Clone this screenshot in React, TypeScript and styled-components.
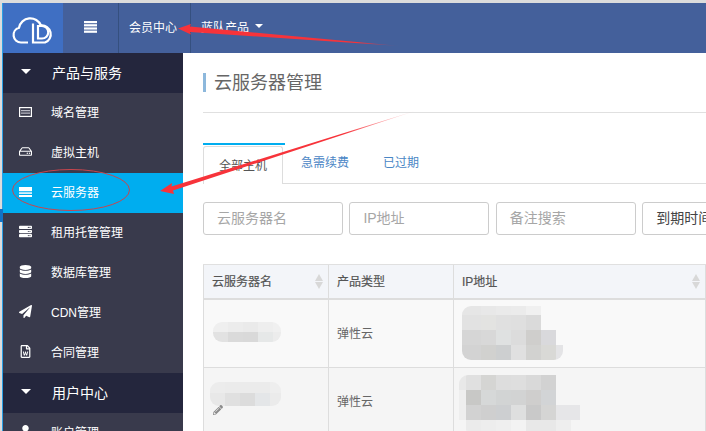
import styled, { createGlobalStyle } from "styled-components"
import type { ReactNode } from "react"
import {
  FaDatabase,
  FaPaperPlane,
  FaPencilAlt,
  FaRegFileWord,
  FaRegHdd,
  FaServer,
  FaUser,
} from "react-icons/fa"

const GlobalStyle = createGlobalStyle`
  html, body {
    margin: 0;
    padding: 0;
    height: 100%;
    overflow: hidden;
    background: #fff;
  }
  body {
    font-family: "Liberation Sans", "Noto Sans CJK SC", sans-serif;
    font-size: 12px;
  }
`

const Page = styled.div`
  position: relative;
  width: 706px;
  height: 431px;
  overflow: hidden;
  box-sizing: border-box;
  padding: 3px 0 0 2px;
  background: #dcdcdc;
`

const Frame = styled.div`
  display: flex;
  flex-direction: column;
  height: 428px;
  border-left: 1px solid #2a9fe4;
  background: #fff;
`

const Header = styled.header`
  display: flex;
  flex: none;
  height: 50px;
  background: #44609b;
  color: #fff;
`

const Logo = styled.div`
  display: flex;
  flex: none;
  width: 60px;
  background: #3f6fc3;
`

const ToggleCell = styled.div`
  display: flex;
  flex: none;
  align-items: center;
  justify-content: center;
  box-sizing: border-box;
  width: 56px;
  padding-bottom: 2px;
  border-right: 1px solid #35507f;
`

const NavCell = styled.div<{ $width: number }>`
  display: flex;
  flex: none;
  align-items: center;
  gap: 6px;
  box-sizing: border-box;
  width: ${(p) => p.$width}px;
  padding: 0 0 4px 10px;
  border-right: 1px solid #35507f;
  &:last-child {
    border-right: none;
  }
`

const Caret = styled.i<{ $size?: number }>`
  display: block;
  flex: none;
  width: 0;
  height: 0;
  border-style: solid;
  border-color: #fff transparent transparent;
  border-width: ${(p) => p.$size ?? 5}px ${(p) => p.$size ?? 5}px 0;
`

const Body = styled.div`
  display: flex;
  flex: 1;
  min-height: 0;
`

const Sidebar = styled.nav`
  flex: none;
  width: 180px;
  overflow: hidden;
  background: #393a4c;
`

const GroupRow = styled.div`
  display: flex;
  align-items: center;
  box-sizing: border-box;
  height: 40px;
  padding: 0 0 3px 18px;
  gap: 21px;
  font-size: 14px;
  color: #fff;
  background: #24263d;
`

const MenuRow = styled.div<{ $active?: boolean }>`
  display: flex;
  align-items: center;
  box-sizing: border-box;
  height: 40px;
  padding: 0 0 3px 16px;
  font-size: 12px;
  color: #fff;
  background: ${(p) => (p.$active ? "#00adef" : "transparent")};
`

const MenuIcon = styled.span`
  display: flex;
  flex: none;
  justify-content: center;
  width: 13px;
  margin-right: 19px;
  font-size: 13px;
`

const Main = styled.main`
  flex: 1;
  min-width: 0;
  overflow: hidden;
  padding: 20px 0 0 20px;
`

const Title = styled.h1`
  margin: 0;
  height: 19px;
  padding-left: 8px;
  border-left: 3px solid #8db8dc;
  font-size: 18px;
  font-weight: 400;
  line-height: 21px;
  color: #666;
`

const Rule = styled.hr`
  height: 1px;
  margin: 20px 0 30px;
  border: none;
  background: #e0e0e0;
`

const TabBar = styled.div`
  display: flex;
  height: 40px;
  border-bottom: 1px solid #ddd;
`

const Tab = styled.div`
  box-sizing: border-box;
  width: 82px;
  padding: 10px 0 0 18px;
  font-size: 12px;
  color: #4a86c5;
`

const ActiveTab = styled.div`
  position: relative;
  box-sizing: border-box;
  width: 80px;
  height: 38px;
  margin-top: 3px;
  padding: 9px 0 0 15px;
  border: 1px solid #ddd;
  border-bottom: none;
  border-radius: 3px 3px 0 0;
  background: #fff;
  font-size: 12px;
  color: #555;
  &::before {
    content: "";
    position: absolute;
    top: -4px;
    left: -1px;
    width: 82px;
    height: 2px;
    background: #00adef;
  }
`

const FilterRow = styled.div`
  display: flex;
  gap: 6.4px;
  margin-top: 18px;
`

const Filter = styled.div<{ $dark?: boolean }>`
  flex: none;
  box-sizing: border-box;
  width: 140px;
  height: 33px;
  padding: 0 13px;
  border: 1px solid #ccc;
  border-radius: 3px;
  font-size: 14px;
  line-height: 30px;
  white-space: nowrap;
  color: ${(p) => (p.$dark ? "#444" : "#a6a6a6")};
`

const Table = styled.div`
  display: grid;
  grid-template-columns: 125px 125px 252px;
  grid-template-rows: 35px 68px 68px;
  width: 503px;
  margin-top: 29px;
  border-top: 1px solid #e0e0e0;
`

const HeadCell = styled.div`
  display: flex;
  align-items: center;
  justify-content: space-between;
  box-sizing: border-box;
  padding: 0 5px 3px 8px;
  background: #f3f5f9;
  border-left: 1px solid #ddd;
  border-right: 1px solid #ddd;
  margin-right: -1px;
  border-bottom: 2px solid #ddd;
  font-size: 12px;
  color: #555;
  -webkit-text-stroke: 0.2px #555;
`

const DataCell = styled.div<{ $even?: boolean }>`
  display: flex;
  flex-direction: column;
  align-items: flex-start;
  justify-content: center;
  box-sizing: border-box;
  overflow: hidden;
  padding: 0 0 3px 8px;
  background: ${(p) => (p.$even ? "#f5f5f5" : "#f9f9f9")};
  border-left: 1px solid #ddd;
  border-right: 1px solid #ddd;
  margin-right: -1px;
  border-bottom: 1px solid #ddd;
  font-size: 12px;
  color: #666;
`

const TopCell = styled(DataCell)`
  justify-content: flex-start;
`

const Sort = styled.span`
  display: flex;
  flex: none;
  flex-direction: column;
  gap: 1px;
  margin-top: 3px;
  &::before,
  &::after {
    content: "";
    width: 0;
    height: 0;
    border-style: solid;
    border-color: transparent transparent #d8d8d8;
    border-width: 0 4px 7px;
  }
  &::after {
    border-color: #d8d8d8 transparent transparent;
    border-width: 7px 4px 0;
  }
`

const Mosaic = styled.div<{ $cols: string; $rows: string; $x: number; $y: number }>`
  display: grid;
  flex: none;
  align-self: flex-start;
  grid-template-columns: ${(p) => p.$cols};
  grid-template-rows: ${(p) => p.$rows};
  margin-left: ${(p) => p.$x}px;
  margin-top: ${(p) => p.$y}px;
  overflow: hidden;
  border-radius: 9px;
`

const Pencil = styled.span`
  display: flex;
  margin: -1px 0 0 1px;
  font-size: 10px;
  color: #8a8a8a;
`

// marks drawn on the screenshot by whoever took it
const Marks = styled.svg`
  position: absolute;
  inset: 0;
  pointer-events: none;
`

const EdgePatch = styled.div`
  position: absolute;
  left: 0;
  top: 209px;
  width: 3px;
  height: 13px;
  background: #1272c4;
`

const BarsIcon = () => (
  <svg width="13" height="12" viewBox="0 0 13 12" fill="#fff">
    <rect y="0" width="13" height="2.2" />
    <rect y="3.2" width="13" height="2.2" />
    <rect y="6.4" width="13" height="2.2" />
    <rect y="9.6" width="13" height="2.2" />
  </svg>
)

const CloudLogo = () => (
  <svg width="60" height="50" viewBox="3 3 60 50" fill="none" stroke="#fff" strokeWidth="2.2">
    <path d="M28 42.5H21A7.5 7.5 0 0 1 19 27.8A11.5 11.5 0 0 1 41 25.5A8.8 8.8 0 0 1 45 42.5H33V23.5" />
    <path d="M38 26V38.5H42A6.2 6.2 0 0 0 42 26Z" />
  </svg>
)

const DomainIcon = () => (
  <svg width="13" height="10" viewBox="0 0 13 10" fill="none">
    <rect x="0.6" y="0.6" width="11.8" height="8.8" stroke="#fff" strokeWidth="1.2" />
    <path d="M2 3.6H11M2 6.2H11" stroke="#b9b9c4" strokeWidth="1.2" />
  </svg>
)

const BandsIcon = () => (
  <svg width="13" height="10" viewBox="0 0 13 10">
    <rect width="13" height="4.2" fill="#fff" />
    <rect y="5.2" width="13" height="1.8" fill="#d8f1fc" />
    <rect y="8" width="13" height="2" fill="#fff" />
  </svg>
)

const menuTop: [ReactNode, string, boolean?][] = [
  [<DomainIcon />, "域名管理"],
  [<FaRegHdd />, "虚拟主机"],
  [<BandsIcon />, "云服务器", true],
  [<FaServer />, "租用托管管理"],
  [<FaDatabase />, "数据库管理"],
  [<FaPaperPlane />, "CDN管理"],
  [<FaRegFileWord />, "合同管理"],
]

type Cell = string | null

const renderCells = (rows: Cell[][]) =>
  rows.flat().map((color, i) => <div key={i} style={{ background: color ?? "transparent" }} />)

const nameOne: Cell[][] = [
  ["#efefef", "#ececec", "#eaeaea", "#eeeeee", "#f0f0f0"],
  ["#e2e2e2", "#dadada", "#d9d9d9", "#e6e8e8", "#ececec"],
]

const nameTwo: Cell[][] = [
  ["#ececec", "#ebebeb", "#ebebeb", "#ebebeb", "#eeeeee"],
  ["#e8e8e8", "#e0e0e0", "#dcdcdc", "#e4e6e8", "#ebebeb"],
]

const ipOne: Cell[][] = [
  ["#e6e6e6", "#e8e8e8", "#eaeaea", "#ebebeb", "#f0f0f0", null, null],
  ["#e2e2e2", "#e3e3e1", "#e0e0e0", "#dfdfdf", "#dadada", null, null],
  ["#d6d6d6", "#d8d8d8", "#dfe1e1", "#dcdcdc", "#cfcecc", "#d9d9dc", null],
  ["#d3d3d3", "#d1d1cf", "#cdcfd0", "#e0e0e0", "#d2d2d0", "#d9d9d6", "#e4e4e6"],
]

const ipTwo: Cell[][] = [
  ["#e8e8e8", "#e0e0e0", "#d5d5d3", "#dddddd", "#dedede", "#d9d9d9", "#d2d2d2", null, null],
  ["#eeeeee", "#c8c8c6", "#d6d8d8", "#d2d4d4", "#d2d3d3", "#cfcecd", "#d2d4d6", null, null],
  ["#eeeeee", "#d2d2d2", "#cfcfcf", "#cdcfd1", "#dedfdf", "#c9c9c9", "#d5d5d4", "#e6e6e8", "#e6e6e8"],
  [null, "#ebebeb", "#ededed", "#efefef", "#f3f3f3", "#e8e8e8", "#e8e8e8", "#eeeeee", null],
]

export default function App() {
  return (
    <>
      <GlobalStyle />
      <Page>
        <Frame>
          <Header>
            <Logo>
              <CloudLogo />
            </Logo>
            <ToggleCell>
              <BarsIcon />
            </ToggleCell>
            <NavCell $width={72}>会员中心</NavCell>
            <NavCell $width={88}>
              蓝队产品
              <Caret $size={4} />
            </NavCell>
          </Header>
          <Body>
            <Sidebar>
              <GroupRow>
                <Caret />
                产品与服务
              </GroupRow>
              {menuTop.map(([icon, label, active]) => (
                <MenuRow key={label} $active={active}>
                  <MenuIcon>{icon}</MenuIcon>
                  {label}
                </MenuRow>
              ))}
              <GroupRow>
                <Caret />
                用户中心
              </GroupRow>
              <MenuRow>
                <MenuIcon>
                  <FaUser />
                </MenuIcon>
                账户管理
              </MenuRow>
            </Sidebar>
            <Main>
              <Title>云服务器管理</Title>
              <Rule />
              <TabBar>
                <ActiveTab>全部主机</ActiveTab>
                <Tab>急需续费</Tab>
                <Tab>已过期</Tab>
              </TabBar>
              <FilterRow>
                <Filter>云服务器名</Filter>
                <Filter>IP地址</Filter>
                <Filter>备注搜索</Filter>
                <Filter $dark>到期时间</Filter>
              </FilterRow>
              <Table>
                <HeadCell>
                  云服务器名
                  <Sort />
                </HeadCell>
                <HeadCell>产品类型</HeadCell>
                <HeadCell>
                  IP地址
                  <Sort />
                </HeadCell>

                <DataCell>
                  <Mosaic $cols="15px 15px 15px 15px 8px" $rows="10px 10px" $x={1} $y={0}>
                    {renderCells(nameOne)}
                  </Mosaic>
                </DataCell>
                <DataCell>弹性云</DataCell>
                <TopCell>
                  <Mosaic
                    $cols="19px 15px 15px 15px 15px 15px 7px"
                    $rows="9px 15px 15px 15px"
                    $x={0}
                    $y={6}
                  >
                    {renderCells(ipOne)}
                  </Mosaic>
                </TopCell>

                <TopCell $even>
                  <Mosaic $cols="15px 15px 15px 15px 11px" $rows="11px 13px" $x={-2} $y={14}>
                    {renderCells(nameTwo)}
                  </Mosaic>
                  <Pencil>
                    <FaPencilAlt />
                  </Pencil>
                </TopCell>
                <DataCell $even>弹性云</DataCell>
                <TopCell $even>
                  <Mosaic
                    $cols="7px 15px 15px 15px 15px 15px 15px 15px 9px"
                    $rows="15px 15px 15px 11px"
                    $x={-3}
                    $y={7}
                  >
                    {renderCells(ipTwo)}
                  </Mosaic>
                </TopCell>
              </Table>
            </Main>
          </Body>
        </Frame>
        <EdgePatch />
        <Marks width="706" height="431" viewBox="0 0 706 431">
          <defs>
            <linearGradient id="fadeTop" x1="190" y1="30" x2="400" y2="46" gradientUnits="userSpaceOnUse">
              <stop offset="0" stopColor="#f7333a" />
              <stop offset="0.8" stopColor="#f7333a" />
              <stop offset="1" stopColor="#f7333a" stopOpacity="0" />
            </linearGradient>
            <linearGradient id="fadeSide" x1="170" y1="188" x2="418" y2="110" gradientUnits="userSpaceOnUse">
              <stop offset="0" stopColor="#f7333a" />
              <stop offset="0.7" stopColor="#f7333a" />
              <stop offset="1" stopColor="#f7333a" stopOpacity="0" />
            </linearGradient>
          </defs>
          <polygon points="178,28.5 191,24 190,26.5 400,46 190,32 191,34.5" fill="url(#fadeTop)" />
          <polygon points="160,191 172,183 171.5,186.5 418,110 173,190.5 174,194" fill="url(#fadeSide)" />
          <ellipse cx="71" cy="190" rx="58.5" ry="20.5" fill="none" stroke="#c9464e" strokeWidth="1" />
        </Marks>
      </Page>
    </>
  )
}
